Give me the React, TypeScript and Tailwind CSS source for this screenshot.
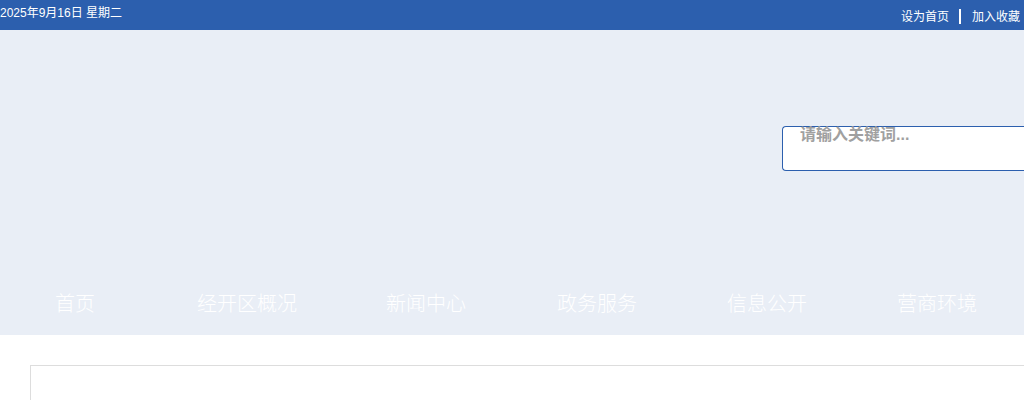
import React from "react";

const nav = [
  { t: "首页", ml: "ml-[55px]" },
  { t: "经开区概况", ml: "ml-[102px]" },
  { t: "新闻中心", ml: "ml-[89px]" },
  { t: "政务服务", ml: "ml-[91px]" },
  { t: "信息公开", ml: "ml-[90px]" },
  { t: "营商环境", ml: "ml-[90px]" },
];

export default function App() {
  return (
    <div
      className="w-[1024px] h-[400px] overflow-hidden bg-white"
      style={{ fontFamily: '"Liberation Sans", "Noto Sans CJK SC", sans-serif' }}
    >
      <div className="h-[30px] bg-[#2c5fae] flex justify-between text-white text-[12px]">
        <div className="leading-[12px] pt-[7px]">2025年9月16日 星期二</div>
        <div className="flex items-start pt-[10px] leading-[14px] pr-[4px]">
          <span>设为首页</span>
          <span className="ml-[10px] mr-[11px] -mt-[1px] w-[2px] h-[15px] bg-white"></span>
          <span>加入收藏</span>
        </div>
      </div>
      <div className="h-[305px] bg-[#e9eef6] flex flex-col">
        <div className="h-[96px]"></div>
        <div className="flex justify-end">
          <div className="w-[242px] h-[45px] border border-[#2c5fae] border-r-0 rounded-l-[4px] bg-white pl-[17px] text-[16px] font-bold text-[#a0a0a0] leading-[16px]">
            请输入关键词...
          </div>
        </div>
        <div className="flex items-start text-white text-[20px] leading-[20px] pt-[123px] font-light">
          {nav.map((n) => (
            <span key={n.t} className={n.ml}>
              {n.t}
            </span>
          ))}
        </div>
      </div>
      <div className="pt-[30px] pl-[30px]">
        <div className="h-[100px] border border-[#dddddd] border-r-0"></div>
      </div>
    </div>
  );
}
